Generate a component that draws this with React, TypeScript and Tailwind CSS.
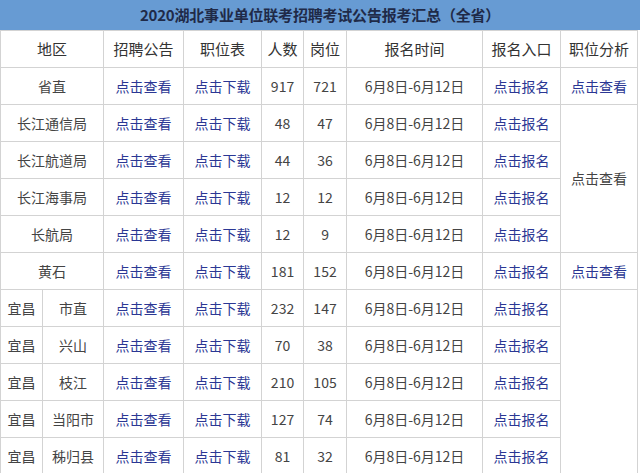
import React from "react";

const L = ({ children }: { children: React.ReactNode }) => (
  <span className="text-[#2b3794]">{children}</span>
);

type Row = {
  region: string;
  n: number;
  p: number;
  analysis?: "link" | "merged4" | "merged5" | "none";
  yc?: boolean;
};

const rows: Row[] = [
  { region: "省直", n: 917, p: 721, analysis: "link" },
  { region: "长江通信局", n: 48, p: 47, analysis: "merged4" },
  { region: "长江航道局", n: 44, p: 36, analysis: "none" },
  { region: "长江海事局", n: 12, p: 12, analysis: "none" },
  { region: "长航局", n: 12, p: 9, analysis: "none" },
  { region: "黄石", n: 181, p: 152, analysis: "link" },
  { region: "市直", n: 232, p: 147, analysis: "merged5", yc: true },
  { region: "兴山", n: 70, p: 38, analysis: "none", yc: true },
  { region: "枝江", n: 210, p: 105, analysis: "none", yc: true },
  { region: "当阳市", n: 127, p: 74, analysis: "none", yc: true },
  { region: "秭归县", n: 81, p: 32, analysis: "none", yc: true },
];

const td = "border border-[#d3d3d3] text-center align-middle p-0";

export default function App() {
  return (
    <div
      className="w-[640px] h-[473px] overflow-hidden bg-white text-[14px] text-[#444]"
      style={{ fontFamily: '"Noto Sans CJK SC", "Noto Sans", sans-serif' }}
    >
      <div className="h-[30px] w-full bg-[#679bd3] flex items-center justify-center text-[15px] font-bold text-[#1f2a48] tracking-[-0.2px]">
        2020湖北事业单位联考招聘考试公告报考汇总（全省）
      </div>
      <table className="table-fixed border-collapse w-[637px]">
        <colgroup>
          <col className="w-[42px]" />
          <col className="w-[61px]" />
          <col className="w-[80px]" />
          <col className="w-[78px]" />
          <col className="w-[42px]" />
          <col className="w-[43px]" />
          <col className="w-[136px]" />
          <col className="w-[78px]" />
          <col className="w-[77px]" />
        </colgroup>
        <tbody>
          <tr className="h-[37px] text-[#333] text-[15px]">
            <td className={td} colSpan={2}>地区</td>
            <td className={td}>招聘公告</td>
            <td className={td}>职位表</td>
            <td className={td}>人数</td>
            <td className={td}>岗位</td>
            <td className={td}>报名时间</td>
            <td className={td}>报名入口</td>
            <td className={td}>职位分析</td>
          </tr>
          {rows.map((r, i) => (
            <tr key={i} className="h-[37px]">
              {r.yc ? (
                <>
                  <td className={td}>宜昌</td>
                  <td className={td}>{r.region}</td>
                </>
              ) : (
                <td className={td} colSpan={2}>{r.region}</td>
              )}
              <td className={td}><L>点击查看</L></td>
              <td className={td}><L>点击下载</L></td>
              <td className={td}>{r.n}</td>
              <td className={td}>{r.p}</td>
              <td className={td}>6月8日-6月12日</td>
              <td className={td}><L>点击报名</L></td>
              {r.analysis === "link" && (
                <td className={td}><L>点击查看</L></td>
              )}
              {r.analysis === "merged4" && (
                <td className={td} rowSpan={4}>点击查看</td>
              )}
              {r.analysis === "merged5" && (
                <td className={td} rowSpan={5}></td>
              )}
            </tr>
          ))}
        </tbody>
      </table>
    </div>
  );
}
